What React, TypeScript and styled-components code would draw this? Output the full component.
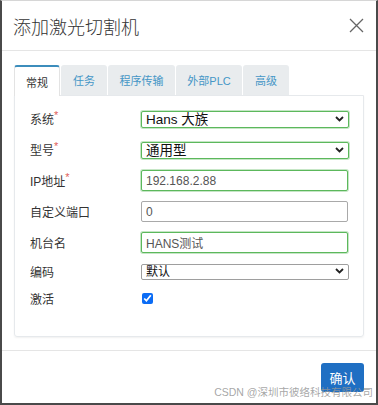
import React, { useState } from "react";
import styled, { createGlobalStyle } from "styled-components";

const GlobalStyle = createGlobalStyle`
  html, body {
    margin: 0;
    padding: 0;
    background: #ffffff;
  }
  body {
    font-family: "Liberation Sans", "Noto Sans CJK SC", Arial, sans-serif;
    color: #333;
  }
`;

const Modal = styled.div`
  position: relative;
  width: 378px;
  height: 405px;
  box-sizing: border-box;
  border-left: 2px solid #4a4a4a;
  border-right: 2px solid #4a4a4a;
  border-bottom: 2px solid #4a4a4a;
  border-top: 1px solid #d6d6d6;
  background: #fff;
  display: flex;
  flex-direction: column;
  overflow: hidden;
`;

const Header = styled.div`
  height: 49px;
  display: flex;
  align-items: center;
  justify-content: space-between;
  padding: 0 11px 0 11px;
  border-bottom: 1px solid #e5e5e5;
`;

const Title = styled.h4`
  margin: 0;
  font-size: 18px;
  font-weight: 300;
  color: #333;
`;

const CloseButton = styled.button`
  border: none;
  background: none;
  padding: 0;
  width: 18px;
  height: 18px;
  display: flex;
  align-items: center;
  justify-content: center;
  cursor: pointer;
`;

const Body = styled.div`
  padding: 14px 12px 13px 12px;
`;

const TabBar = styled.div`
  display: flex;
  gap: 1px;
  height: 30px;
`;

const Tab = styled.div<{ active: boolean; w: number }>`
  width: ${(p) => p.w}px;
  box-sizing: border-box;
  display: flex;
  align-items: center;
  justify-content: center;
  font-size: 11px;
  cursor: pointer;
  color: ${(p) => (p.active ? "#333" : "#4596c6")};
  background: ${(p) => (p.active ? "#fff" : "#e9ecee")};
  border-top: ${(p) => (p.active ? "2px solid #3c8dbc" : "none")};
  border-left: ${(p) => (p.active ? "1px solid #e3e3e3" : "none")};
  border-right: ${(p) => (p.active ? "1px solid #e3e3e3" : "none")};
  border-radius: 3px 3px 0 0;
  position: relative;
  height: ${(p) => (p.active ? "31px" : "30px")};
  z-index: ${(p) => (p.active ? 1 : 0)};
`;

const Panel = styled.div`
  border: 1px solid #e6e9ec;
  border-radius: 0 0 3px 3px;
  padding: 12px 15px 28px 15px;
  box-shadow: 0 1px 2px rgba(0, 0, 0, 0.06);
  display: flex;
  flex-direction: column;
  gap: 10px;
`;

const Row = styled.div<{ h: number }>`
  display: flex;
  align-items: center;
  height: ${(p) => p.h}px;
`;

const Label = styled.label`
  width: 111px;
  font-size: 12px;
  color: #333;
  flex-shrink: 0;
`;

const Required = styled.span`
  color: #e0605a;
  font-size: 11px;
  vertical-align: top;
  position: relative;
  top: -1px;
`;

const SelectWrap = styled.div`
  position: relative;
  width: 208px;
`;

const Select = styled.select<{ ok: boolean; h: number }>`
  appearance: none;
  -webkit-appearance: none;
  width: 208px;
  height: ${(p) => p.h}px;
  box-sizing: border-box;
  padding: 0 18px 0 4px;
  font-family: "Liberation Sans", "Noto Sans CJK SC", Arial, sans-serif;
  font-size: ${(p) => (p.ok ? "13.5px" : "12px")};
  color: #111;
  background: #fff;
  border: 1px solid ${(p) => (p.ok ? "#5cb85c" : "#9e9e9e")};
  box-shadow: ${(p) => (p.ok ? "0 0 0 1px rgba(92,184,92,0.35)" : "none")};
  border-radius: 2px;
  outline: none;
  line-height: ${(p) => p.h - 2}px;
`;

const Chevron = styled.svg`
  position: absolute;
  right: 5px;
  top: 50%;
  transform: translateY(-50%);
  pointer-events: none;
`;

const Input = styled.input<{ ok: boolean }>`
  width: 208px;
  height: 21px;
  box-sizing: border-box;
  padding: 0 4px;
  font-family: "Liberation Sans", "Noto Sans CJK SC", Arial, sans-serif;
  font-size: 12px;
  color: #555;
  background: #fff;
  border: 1px solid ${(p) => (p.ok ? "#5cb85c" : "#a9a9a9")};
  box-shadow: ${(p) => (p.ok ? "0 0 0 1px rgba(92,184,92,0.35)" : "none")};
  border-radius: 2px;
  outline: none;
`;

const Check = styled.input`
  width: 11px;
  height: 11px;
  margin: 0 0 0 1px;
  accent-color: #0b6cf5;
`;

const Footer = styled.div`
  flex: 1;
  border-top: 1px solid #e5e5e5;
  display: flex;
  justify-content: flex-end;
  align-items: flex-start;
  padding: 12px 12px 0 0;
`;

const PrimaryButton = styled.button`
  width: 43px;
  height: 29px;
  border: none;
  border-radius: 3px;
  background: #1f6fc3;
  color: #fff;
  font-family: "Liberation Sans", "Noto Sans CJK SC", Arial, sans-serif;
  font-size: 13px;
  cursor: pointer;
`;

const Watermark = styled.div`
  position: absolute;
  right: 3px;
  bottom: 4px;
  font-size: 10.5px;
  color: rgba(150, 150, 150, 0.85);
  white-space: nowrap;
  pointer-events: none;
`;

const tabs = [
  { name: "常规", w: 46 },
  { name: "任务", w: 46 },
  { name: "程序传输", w: 67 },
  { name: "外部PLC", w: 66 },
  { name: "高级", w: 46 },
];

const ChevronIcon = () => (
  <Chevron width="9" height="6" viewBox="0 0 9 6">
    <path d="M1 1 L4.5 4.5 L8 1" fill="none" stroke="#222" strokeWidth="1.8" />
  </Chevron>
);

export default () => {
  const [activeTab, setActiveTab] = useState("常规");
  const [active, setActive] = useState(true);
  return (
    <>
      <GlobalStyle />
      <Modal>
        <Header>
          <Title>添加激光切割机</Title>
          <CloseButton>
            <svg width="15" height="15" viewBox="0 0 15 15">
              <path d="M1 1 L14 14 M14 1 L1 14" stroke="#666" strokeWidth="1.3" />
            </svg>
          </CloseButton>
        </Header>
        <Body>
          <TabBar>
            {tabs.map((t) => (
              <Tab
                key={t.name}
                w={t.w}
                active={activeTab === t.name}
                onClick={() => setActiveTab(t.name)}
              >
                {t.name}
              </Tab>
            ))}
          </TabBar>
          <Panel>
            <Row h={21}>
              <Label>
                系统<Required>*</Required>
              </Label>
              <SelectWrap>
                <Select ok h={17} defaultValue="hans">
                  <option value="hans">Hans 大族</option>
                </Select>
                <ChevronIcon />
              </SelectWrap>
            </Row>
            <Row h={21}>
              <Label>
                型号<Required>*</Required>
              </Label>
              <SelectWrap>
                <Select ok h={17} defaultValue="common">
                  <option value="common">通用型</option>
                </Select>
                <ChevronIcon />
              </SelectWrap>
            </Row>
            <Row h={21}>
              <Label>
                IP地址<Required>*</Required>
              </Label>
              <Input ok defaultValue="192.168.2.88" />
            </Row>
            <Row h={21}>
              <Label>自定义端口</Label>
              <Input ok={false} defaultValue="0" />
            </Row>
            <Row h={21}>
              <Label>机台名</Label>
              <Input ok defaultValue="HANS测试" />
            </Row>
            <Row h={16}>
              <Label>编码</Label>
              <SelectWrap>
                <Select ok={false} h={16} defaultValue="default">
                  <option value="default">默认</option>
                </Select>
                <ChevronIcon />
              </SelectWrap>
            </Row>
            <Row h={19}>
              <Label>激活</Label>
              <Check
                type="checkbox"
                checked={active}
                onChange={() => setActive(!active)}
              />
            </Row>
          </Panel>
        </Body>
        <Footer>
          <PrimaryButton>确认</PrimaryButton>
        </Footer>
        <Watermark>CSDN @深圳市彼络科技有限公司</Watermark>
      </Modal>
    </>
  );
};
